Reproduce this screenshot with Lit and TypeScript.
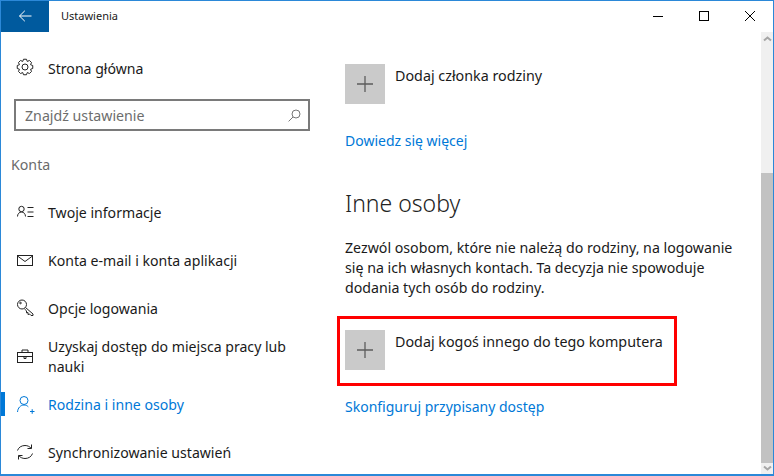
import { LitElement, html, css, svg } from "lit";
import { customElement } from "lit/decorators.js";

const stroke = (inner: unknown, w = 20, h = 20, color = "#222") => html`<svg width=${w} height=${h} viewBox="0 0 ${w} ${h}" fill="none" stroke=${color} stroke-width="1">${inner}</svg>`;

/* Gear outline: eight teeth alternating between an outer and an inner radius. */
const gearPath = (() => {
  const pts: string[] = [];
  const teeth = 8;
  for (let i = 0; i < teeth; i++) {
    const a = (i / teeth) * Math.PI * 2;
    const step = (Math.PI * 2) / teeth;
    [
      [6, -0.5],
      [7.900, -0.24],
      [7.900, 0.24],
      [6, 0.5],
    ].forEach(([r, k]) => {
      const t = a + k * step;
      pts.push(`${(9 + r * Math.cos(t)).toFixed(2)} ${(9 + r * Math.sin(t)).toFixed(2)}`);
    });
  }
  return `M${pts.join("L")}Z`;
})();

const icons = {
  gear: stroke(svg`<g transform="translate(0 0)"><circle cx="9" cy="9" r="3"/><path d=${gearPath}/></g>`),
  info: stroke(svg`<circle cx="5.500" cy="7" r="2.700"/><path d="M1.500 14.500c0-2.500 1.700-4.500 4-4.500s4 2 4 4.500M11.500 5.500h6M11.500 10h6M11.500 14.500h6"/>`),
  mail: stroke(svg`<rect x="1.500" y="5.500" width="15" height="10"/><path d="M1.500 6l7.500 5.500L16.500 6"/>`),
  key: stroke(svg`<circle cx="6" cy="6.500" r="4.500"/><circle cx="4.500" cy="5" r=".8"/><path d="M9.500 9.500l7.500 6.500v1.500h-2L13.500 16l-1.500.5v-2l-1.500.3v-2L8.500 11"/>`),
  brief: stroke(svg`<rect x="1.500" y="6.500" width="15" height="10"/><path d="M6 6.500V4h6v2.500M1.500 10.500h15M8 10.500v2h2v-2"/>`),
  person: stroke(svg`<circle cx="8" cy="6.500" r="4"/><path d="M1.500 18c.3-4 3-7 6.500-7 1.800 0 3.200.7 4.300 1.800M14 17.500h4.500M16.200 15.200v4.600"/>`, 20, 20, "#0078d7"),
  sync: stroke(svg`<path d="M1.500 8.500C2.500 5.500 5.300 3.500 9 3.500c2.600 0 4.700 1.100 6.200 2.900M16.500 11.500c-1 3-3.800 5-7.500 5-2.600 0-4.700-1.100-6.200-2.900M15.500 2.500v4h-4M2.500 17.500v-4h4"/>`),
  plus: stroke(svg`<path d="M0 8h16M8 0v16" stroke-width="1.300"/>`, 16, 16, "#5c5c5c"),
  search: stroke(svg`<circle cx="8" cy="5" r="4"/><path d="M5 8L.6 12.400"/>`, 13, 13, "#777"),
  back: stroke(svg`<path d="M.5 6h12M5.800 .8L.5 6l5.300 5.200"/>`, 13, 12, "#fff"),
  min: stroke(svg`<path d="M0 5.500h10"/>`, 10, 10, "#000"),
  max: stroke(svg`<rect x=".5" y=".5" width="9" height="9"/>`, 10, 10, "#000"),
  close: stroke(svg`<path d="M0 0l10 10M10 0L0 10"/>`, 10, 10, "#000"),
  up: stroke(svg`<path d="M1 5.500l3.500-3 3.500 3" stroke-width="2"/>`, 9, 7, "#a6a6a6"),
  down: stroke(svg`<path d="M1 1.500l3.500 3 3.500-3" stroke-width="2"/>`, 9, 7, "#a6a6a6"),
};

const nav = [
  { icon: icons.info, label: "Twoje informacje" },
  { icon: icons.mail, label: "Konta e-mail i konta aplikacji" },
  { icon: icons.key, label: "Opcje logowania" },
  { icon: icons.brief, label: "Uzyskaj dostęp do miejsca pracy lub nauki" },
  { icon: icons.person, label: "Rodzina i inne osoby", active: true },
  { icon: icons.sync, label: "Synchronizowanie ustawień" },
];

@customElement("app-root")
export class AppRoot extends LitElement {
  static styles = css`
    :host {
      display: block;
      width: 774px;
      height: 476px;
      overflow: hidden;
      background: #fff;
      font-family: "Noto Sans", "Open Sans", sans-serif;
      font-size: 14.200px;
      color: #1a1a1a;
    }
    .window {
      box-sizing: border-box;
      height: 476px;
      border: 1px solid #2b88d8;
      border-bottom-width: 2px;
      display: flex;
      flex-direction: column;
      overflow: hidden;
    }
    .title {
      flex: 0 0 31px;
      display: flex;
      align-items: center;
    }
    .back {
      box-sizing: border-box;
      width: 48px;
      height: 31px;
      padding-bottom: 2px;
      background: #005a9e;
      display: flex;
      align-items: center;
      justify-content: center;
    }
    .title-text {
      margin: 0 0 2px 12px;
      font-size: 11px;
      flex: 1;
    }
    .ctl {
      box-sizing: border-box;
      width: 46px;
      height: 31px;
      padding-bottom: 2px;
      display: flex;
      align-items: center;
      justify-content: center;
    }
    .ctl-row { display: flex; }
    .body { flex: 1; display: flex; min-height: 0; }
    .side { width: 320px; flex: none; }
    .row {
      display: flex;
      align-items: center;
      height: 48px;
      padding-left: 15px;
      position: relative;
    }
    .row .ic { width: 20px; height: 20px; margin-right: 12px; flex: none; display: flex; align-items: center; }
    .row .tx { line-height: 20px; width: 250px; font-size: 14.100px; padding-top: 2px; }
    .home { margin-top: 12px; }
    .search {
      box-sizing: border-box;
      margin: 7px 0 0 13px;
      width: 296px;
      height: 32px;
      border: 2px solid #7a7a7a;
      display: flex;
      align-items: center;
      justify-content: space-between;
      padding: 0 7px 0 9px;
      color: #6d6d6d;
    }
    .group { margin: 24px 0 0 10px; height: 33px; line-height: 20px; color: #6b6b6b; }
    .active { color: #0078d7; }
    .active::before {
      content: "";
      position: absolute;
      left: 0;
      top: 12px;
      width: 4px;
      height: 24px;
      background: #0078d7;
    }
    .main { flex: 1; padding: 32px 0 0 24px; }
    .add { display: flex; gap: 10px; position: relative; }
    .tile {
      width: 40px;
      height: 40px;
      background: #cacaca;
      display: flex;
      align-items: center;
      justify-content: center;
      flex: none;
    }
    .add span { line-height: 22px; font-size: 14.300px; padding-top: 1px; }
    a { color: #0078d7; text-decoration: none; display: block; line-height: 20px; font-size: 14px; }
    .l1 { margin-top: 27px; }
    h2 { font-weight: 300; font-size: 23px; line-height: 32px; margin: 36px 0 0; color: #222; }
    p { margin: 19px 0 0; line-height: 20px; width: 400px; }
    .second { margin-top: 32px; }
    .mark {
      position: absolute;
      left: -8px;
      top: -14px;
      width: 340px;
      height: 70px;
      box-sizing: border-box;
      border: 3px solid #f00;
    }
    .l2 { margin-top: 27px; }
    .scroll {
      width: 12px;
      flex: none;
      background: #f0f0f0;
      display: flex;
      flex-direction: column;
      align-items: center;
      justify-content: space-between;
      position: relative;
    }
    .arrow { height: 12px; display: flex; align-items: center; justify-content: center; }
    .thumb {
      position: absolute;
      left: 0;
      top: 141px;
      width: 12px;
      height: 290px;
      background: #c2c2c2;
    }
  `;

  render() {
    return html`<div class="window">
      <div class="title">
        <div class="back">${icons.back}</div>
        <div class="title-text">Ustawienia</div>
        <div class="ctl-row">
          <div class="ctl">${icons.min}</div>
          <div class="ctl">${icons.max}</div>
          <div class="ctl">${icons.close}</div>
        </div>
      </div>
      <div class="body">
        <div class="side">
          <div class="row home"><div class="ic">${icons.gear}</div><div class="tx">Strona główna</div></div>
          <div class="search"><span>Znajdź ustawienie</span>${icons.search}</div>
          <div class="group">Konta</div>
          ${nav.map(
            (n) => html`<div class="row ${n.active ? "active" : ""}">
              <div class="ic">${n.icon}</div><div class="tx">${n.label}</div>
            </div>`
          )}
        </div>
        <div class="main">
          <div class="add">
            <div class="tile">${icons.plus}</div><span>Dodaj członka rodziny</span>
          </div>
          <a class="l1">Dowiedz się więcej</a>
          <h2>Inne osoby</h2>
          <p>Zezwól osobom, które nie należą do rodziny, na logowanie się na ich własnych kontach. Ta decyzja nie spowoduje dodania tych osób do rodziny.</p>
          <div class="add second">
            <div class="tile">${icons.plus}</div><span>Dodaj kogoś innego do tego komputera</span>
            <div class="mark"></div>
          </div>
          <a class="l2">Skonfiguruj przypisany dostęp</a>
        </div>
        <div class="scroll">
          <div class="arrow">${icons.up}</div>
          <div class="thumb"></div>
          <div class="arrow">${icons.down}</div>
        </div>
      </div>
    </div>`;
  }
}
